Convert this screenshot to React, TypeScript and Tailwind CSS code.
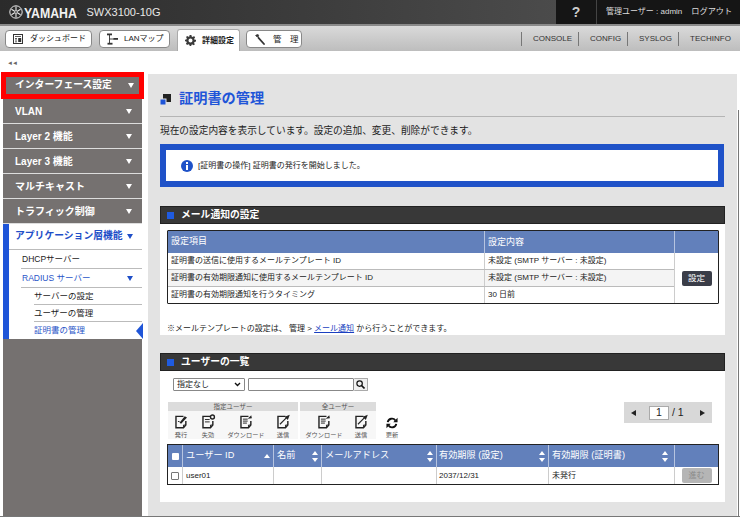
import type { ReactNode } from "react";

const NAV_ITEMS = ["VLAN", "Layer 2 機能", "Layer 3 機能", "マルチキャスト", "トラフィック制御"];

function Caret({ className = "border-t-white" }: { className?: string }) {
  return <span className={`h-0 w-0 border-x-[3.5px] border-t-[5px] border-x-transparent ${className}`} />;
}

function Sort() {
  return (
    <span className="flex flex-col gap-[3px]">
      <span className="h-0 w-0 border-x-[3px] border-b-[4px] border-x-transparent border-b-white" />
      <span className="h-0 w-0 border-x-[3px] border-t-[4px] border-x-transparent border-t-white" />
    </span>
  );
}

function YamahaMark() {
  return (
    <svg width="14" height="14" viewBox="0 0 14 14" fill="none" stroke="#e8e8e8">
      <circle cx="7" cy="7" r="6.2" strokeWidth="1" />
      <circle cx="7" cy="7" r="1.4" strokeWidth="0.8" />
      <path d="M7 5.5V1.6M7 8.5v3.9M5.7 6.2 2.4 4.3M8.3 7.8l3.3 1.9M5.7 7.8 2.4 9.7M8.3 6.2l3.3-1.9" strokeWidth="1.1" />
    </svg>
  );
}

function DashIcon() {
  return (
    <svg width="10" height="10" viewBox="0 0 10 10" fill="none" stroke="#333">
      <rect x="0.5" y="0.5" width="9" height="9" />
      <path d="M2 2.500h6M2 4.500h2M2 6h2M2 7.800h2" strokeWidth="0.8" />
      <rect x="5.200" y="4" width="3" height="4" fill="#333" stroke="none" />
    </svg>
  );
}

function LanIcon() {
  return (
    <svg width="11" height="12" viewBox="0 0 11 12" fill="none" stroke="#333">
      <path d="M2.500 1v10M2.500 6H7" strokeWidth="0.9" />
      <rect x="0" y="0.500" width="5" height="1.800" fill="#333" stroke="none" />
      <rect x="6.500" y="5" width="4.500" height="1.800" fill="#333" stroke="none" />
      <rect x="0.500" y="9.800" width="5" height="1.800" fill="#333" stroke="none" />
    </svg>
  );
}

function GearIcon() {
  return (
    <svg width="11" height="11" viewBox="0 0 12 12">
      <path
        fill="#3a3a3a"
        fillRule="evenodd"
        d="M5 0h2l.3 1.600 1.200.5L9.900 1.200 11 2.800 10 4l.4 1.100L12 5.300v1.900l-1.600.3-.5 1.200.9 1.400L9.500 11.300 8.200 10.300 7 10.700 6.800 12H5.100l-.3-1.500-1.200-.5-1.300.9L1 9.600 1.900 8.300 1.500 7.200 0 6.900V5.100l1.500-.3.500-1.200-.9-1.300L2.400 1l1.300.9L4.800 1.500zM6 3.800a2.200 2.200 0 1 0 0 4.400 2.200 2.200 0 0 0 0-4.400z"
      />
    </svg>
  );
}

function WrenchIcon() {
  return (
    <svg width="10" height="11" viewBox="0 0 10 11" fill="none" stroke="#333">
      <path d="M9 10 3.500 3.800" strokeWidth="1.800" strokeLinecap="round" />
      <path d="M.5 1.500 2 3l1.500-.5.200-1.400L2.500.3z" fill="#333" strokeWidth="0.6" />
    </svg>
  );
}

function DocIcon({ mark }: { mark: "run" | "revoke" | "download" | "send" }) {
  return (
    <svg width="15" height="15" viewBox="0 0 19 19" fill="none" stroke="#222">
      <path d="M12 3H2.500v14.500h9.500L15 14V9" strokeWidth="1.800" />
      <path d="M15 14h-3v3.500" strokeWidth="1.200" />
      {mark === "run" && (
        <>
          <path d="M7 11l6.500-8 3 1.500-7.500 8z" fill="#222" stroke="none" />
          <path d="M5 9.500h2" strokeWidth="1.200" />
        </>
      )}
      {mark === "revoke" && (
        <>
          <circle cx="14.500" cy="3.800" r="2.500" strokeWidth="1.800" />
          <path d="M5 7h6M5 10h6" strokeWidth="1.200" />
        </>
      )}
      {mark === "download" && (
        <>
          <path d="M5 6.500h6M5 9h6M5 11.500h5" strokeWidth="1.200" />
          <path d="M11 6l4.500-4.500.8 4z" fill="#222" stroke="none" />
        </>
      )}
      {mark === "send" && (
        <>
          <path d="M5 13 14 4" strokeWidth="1.400" />
          <path d="M11 3.500 17.500 1l-2.500 6.500z" fill="#222" stroke="none" />
        </>
      )}
    </svg>
  );
}

function RefreshIcon() {
  return (
    <svg width="12" height="12" viewBox="0 0 14 14" fill="none" stroke="#111" strokeWidth="2.200">
      <path d="M2 6a5 5 0 0 1 9-2" />
      <path d="M12 8a5 5 0 0 1-9 2" />
      <path d="M13.500 1v5h-5z" fill="#111" stroke="none" />
      <path d="M.5 13V8h5z" fill="#111" stroke="none" />
    </svg>
  );
}

function Section({ title, children, className }: { title: string; children: ReactNode; className: string }) {
  return (
    <section className="mb-[18px]">
      <div className="flex h-[18px] items-center gap-[7px] border border-[#222] bg-[#383838] pl-[6px] text-[9.800px] font-bold text-white">
        <span className="h-[7px] w-[7px] bg-[#1f5be0]" />
        {title}
      </div>
      <div className={`bg-white ${className}`}>{children}</div>
    </section>
  );
}

function ToolButton({ label, width, children }: { label: string; width: string; children: ReactNode }) {
  return (
    <div className={`flex flex-col items-center ${width}`}>
      <div className="flex h-[18px] items-end">{children}</div>
      <span className="mt-px whitespace-nowrap text-[6.200px] leading-[9px] text-[#555]">{label}</span>
    </div>
  );
}

export default function App() {
  return (
    <div className="relative h-[517px] w-[740px] overflow-hidden bg-white font-['Liberation_Sans','Noto_Sans_CJK_JP',sans-serif] text-[#222]">
      {/* top bar */}
      <header className="flex h-[24px] bg-gradient-to-r from-[#2b2b2b] to-[#565656] text-white">
        <div className="flex w-[556px] items-center pl-[9px]">
          <YamahaMark />
          <span className="ml-px origin-left scale-x-[0.82] text-[15px] font-bold leading-none text-[#f2f2f2]">YAMAHA</span>
          <span className="-ml-[2px] text-[11px] text-[#e8e8e8]">SWX3100-10G</span>
        </div>
        <div className="flex flex-1 items-center bg-[#151515]">
          <span className="flex h-full w-[41px] items-center justify-center border-r border-[#444] text-[14px] font-bold text-[#ccc]">?</span>
          <span className="ml-[9px] text-[8px] text-[#ddd]">管理ユーザー : admin</span>
          <span className="ml-[9px] text-[8.200px] text-[#ddd]">ログアウト</span>
        </div>
      </header>
      <div className="h-[2px] bg-[#8a8a8a]" />

      {/* tab bar */}
      <nav className="flex h-[25px] bg-gradient-to-b from-[#dadada] to-[#bdbdbd] pl-[5px]">
        <div className="mt-[4px] flex h-[18px] w-[87px] items-center gap-[7px] rounded-[4px] border border-[#888] bg-white pl-[7px] text-[8px]">
          <DashIcon />
          ダッシュボード
        </div>
        <div className="ml-[7px] mt-[4px] flex h-[18px] w-[71px] items-center gap-[6px] rounded-[4px] border border-[#888] bg-white pl-[7px] text-[8px]">
          <LanIcon />
          LANマップ
        </div>
        <div className="ml-[7px] mt-[3px] flex h-[22px] w-[63px] items-center gap-[6px] rounded-t-[3px] border-x border-t border-[#aaa] bg-white pl-[7px] text-[8px] font-bold">
          <GearIcon />
          詳細設定
        </div>
        <div className="ml-[6px] mt-[4px] flex h-[18px] w-[56px] items-center gap-[8px] rounded-[4px] border border-[#888] bg-white pl-[8px] text-[8.500px]">
          <WrenchIcon />
          管　理
        </div>
        <div className="ml-auto flex h-[14px] self-center pr-[9px] text-[8px] leading-[14px] text-[#333]">
          <span className="w-[57px] border-l border-[#777] pl-[11px]">CONSOLE</span>
          <span className="w-[49px] border-l border-[#777] pl-[11px]">CONFIG</span>
          <span className="w-[51px] border-l border-[#777] pl-[11px]">SYSLOG</span>
          <span className="w-[53px] border-l border-[#777] pl-[11px]">TECHINFO</span>
        </div>
      </nav>

      <div className="flex h-[23px] items-center pl-[7px] pt-[1px] text-[6px] leading-none tracking-[-1px] text-[#666]">◄◄</div>

      {/* body */}
      <div className="flex">
        <aside className="flex h-[443px] w-[148px] flex-col">
          <div className="-mt-[2px] ml-px w-[143px] border-[5px] border-[#f00] bg-white">
            <div className="flex h-[17px] items-center justify-between bg-[#757170] pl-[9px] pr-[5px] text-[9.800px] font-bold text-white">
              インターフェース設定
              <Caret />
            </div>
          </div>
          <div className="ml-[3px] flex w-[139px] flex-1 flex-col bg-[#757170]">
            {NAV_ITEMS.map((item) => (
              <div
                key={item}
                className="flex h-[25px] items-center justify-between border-b border-[#ddd] pl-[12px] pr-[10px] text-[10px] font-bold text-white"
              >
                {item}
                <Caret />
              </div>
            ))}
            <div className="flex h-[115px] border-l-[6px] border-[#1f55d8] bg-white">
              <div className="relative flex-1 text-[8.500px]">
                <div className="flex h-[26px] items-center justify-between border-b border-[#bbb] pl-[6px] pr-[9px] text-[9.800px] font-bold text-[#1f4fc8]">
                  アプリケーション層機能
                  <Caret className="border-t-[#1f4fc8]" />
                </div>
                <div className="ml-[12px] flex h-[19px] items-center border-b border-[#bbb] pl-px">DHCPサーバー</div>
                <div className="ml-[12px] flex h-[19px] items-center justify-between border-b border-[#bbb] pl-px pr-[9px] text-[#2a55c8]">
                  RADIUS サーバー
                  <Caret className="border-t-[#1f4fc8]" />
                </div>
                <div className="ml-[25px] flex h-[17px] items-center border-b border-[#bbb]">サーバーの設定</div>
                <div className="ml-[25px] flex h-[17px] items-center border-b border-[#bbb]">ユーザーの管理</div>
                <div className="ml-[25px] flex h-[17px] items-center text-[#2a55c8]">証明書の管理</div>
                <span className="absolute bottom-0 right-[-1px] h-0 w-0 border-y-[8px] border-r-[7px] border-y-transparent border-r-[#1f55d8]" />
              </div>
            </div>
          </div>
        </aside>

        {/* main panel */}
        <main className="h-[443px] w-[589px] bg-[#e3e3e3] px-[12px]">
          <div className="flex h-[43px] items-center gap-[8px] border-b border-[#b5b5b5] pt-[8px]">
            <svg width="11" height="11" viewBox="0 0 11 11">
              <rect x="3" y="0" width="8" height="8" fill="#222" />
              <rect x="0" y="5" width="6" height="6" fill="#1f55d8" stroke="#e3e3e3" />
            </svg>
            <h1 className="text-[14.200px] font-bold text-[#1f55d8]">証明書の管理</h1>
          </div>
          <p className="mt-[6px] text-[9.700px] leading-[15px]">現在の設定内容を表示しています。設定の追加、変更、削除ができます。</p>
          <div className="mr-px mt-[6px] flex h-[43px] items-center border-[6px] border-[#1f52c8] bg-white pl-[15px] text-[8px]">
            <svg width="12" height="12" viewBox="0 0 12 12">
              <circle cx="6" cy="6" r="6" fill="#1f52c8" />
              <rect x="5" y="2" width="2" height="2" fill="#fff" />
              <rect x="5" y="5" width="2" height="5" fill="#fff" />
            </svg>
            <span className="ml-[5px]">[証明書の操作] 証明書の発行を開始しました。</span>
          </div>

          <div className="mt-[19px]">
            <Section title="メール通知の設定" className="h-[111px] px-[7px] pt-[6px]">
              <div className="flex w-[552px] flex-col overflow-hidden rounded-[1px] border border-[#222] text-[8px]">
                <div className="flex h-[22px] items-center bg-[#6280bb] text-[9px] text-white">
                  <span className="w-[316px] pl-[3px]">設定項目</span>
                  <span className="w-[190px] border-l border-[#b6c4e0] pl-[3px] leading-[22px]">設定内容</span>
                  <span className="h-full flex-1 border-l border-[#b6c4e0]" />
                </div>
                <div className="flex">
                  <div className="w-[506px]">
                    <div className="flex h-[17px] items-center border-b border-[#bbb]">
                      <span className="w-[316px] pl-[3px]">証明書の送信に使用するメールテンプレート ID</span>
                      <span className="flex h-full flex-1 items-center border-l border-[#ccc] pl-[3px]">未設定 (SMTP サーバー : 未設定)</span>
                    </div>
                    <div className="flex h-[17px] items-center border-b border-[#bbb] bg-[#f4f4f4]">
                      <span className="w-[316px] pl-[3px]">証明書の有効期限通知に使用するメールテンプレート ID</span>
                      <span className="flex h-full flex-1 items-center border-l border-[#ccc] pl-[3px]">未設定 (SMTP サーバー : 未設定)</span>
                    </div>
                    <div className="flex h-[16px] items-center">
                      <span className="w-[316px] pl-[3px]">証明書の有効期限通知を行うタイミング</span>
                      <span className="flex h-full flex-1 items-center border-l border-[#ccc] pl-[3px]">30 日前</span>
                    </div>
                  </div>
                  <div className="flex flex-1 items-center justify-center border-l border-[#ccc]">
                    <span className="flex h-[15px] w-[30px] items-center justify-center rounded-[2px] bg-[#3a3d48] text-[8.500px] text-white">設定</span>
                  </div>
                </div>
              </div>
              <p className="mt-[19px] text-[8px]">
                ※メールテンプレートの設定は、 管理 &gt; <span className="text-[#1a3fc0] underline">メール通知</span> から行うことができます。
              </p>
            </Section>

            <Section title="ユーザーの一覧" className="h-[131px] px-[7px] pt-[7px]">
              <div className="flex h-[13px] pl-[6px]">
                <div className="flex w-[72px] items-center justify-between rounded-[1px] border border-[#888] pl-[3px] pr-[3px] text-[8px]">
                  指定なし
                  <svg width="7" height="5" viewBox="0 0 7 5" fill="none" stroke="#111" strokeWidth="1.400">
                    <path d="M1 1l2.500 2.500L6 1" />
                  </svg>
                </div>
                <div className="ml-[3px] w-[106px] rounded-[1px] border border-[#888]" />
                <div className="flex w-[14px] items-center justify-center rounded-[1px] border border-l-0 border-[#aaa] bg-[#f0f0f0]">
                  <svg width="9" height="9" viewBox="0 0 9 9" fill="none" stroke="#111">
                    <circle cx="3.600" cy="3.600" r="2.700" strokeWidth="1.200" />
                    <path d="M5.500 5.500 8.500 8.500" strokeWidth="1.600" />
                  </svg>
                </div>
              </div>

              <div className="mt-[11px] flex h-[37px] items-start justify-between pl-px pr-[6px]">
                <div className="flex">
                  <div className="h-[37px] w-[130px] bg-[#f7f7f7]">
                    <div className="h-[9px] bg-[#dcdcdc] text-center text-[6.500px] leading-[9px] text-[#555]">指定ユーザー</div>
                    <div className="flex">
                      <ToolButton label="発行" width="w-[26px]"><DocIcon mark="run" /></ToolButton>
                      <ToolButton label="失効" width="w-[28px]"><DocIcon mark="revoke" /></ToolButton>
                      <ToolButton label="ダウンロード" width="w-[48px]"><DocIcon mark="download" /></ToolButton>
                      <ToolButton label="送信" width="w-[26px]"><DocIcon mark="send" /></ToolButton>
                    </div>
                  </div>
                  <div className="ml-[2px] h-[37px] w-[76px] bg-[#f7f7f7]">
                    <div className="h-[9px] bg-[#dcdcdc] text-center text-[6.500px] leading-[9px] text-[#555]">全ユーザー</div>
                    <div className="flex">
                      <ToolButton label="ダウンロード" width="w-[48px]"><DocIcon mark="download" /></ToolButton>
                      <ToolButton label="送信" width="w-[26px]"><DocIcon mark="send" /></ToolButton>
                    </div>
                  </div>
                  <div className="ml-[3px] mt-[9px]">
                    <ToolButton label="更新" width="w-[26px]"><RefreshIcon /></ToolButton>
                  </div>
                </div>
                <div className="flex h-[21px] w-[88px] items-center bg-[#d8d8d8] pl-[7px] text-[10.500px]">
                  <span className="h-0 w-0 border-y-[3.500px] border-r-[5px] border-y-transparent border-r-[#222]" />
                  <span className="ml-[13px] flex h-[14px] w-[20px] items-center justify-center border border-[#aaa] bg-white">1</span>
                  <span className="ml-[3px]">/ 1</span>
                  <span className="ml-[16px] h-0 w-0 border-y-[3.500px] border-l-[5px] border-y-transparent border-l-[#222]" />
                </div>
              </div>

              <div className="mt-[5px] flex w-[552px] flex-col overflow-hidden border border-[#222]">
                <div className="flex h-[22px] items-center bg-[#6280bb] text-[9.200px] text-white">
                  <span className="flex h-full w-[14px] items-center justify-center">
                    <span className="h-[7px] w-[7px] rounded-[1px] bg-white" />
                  </span>
                  <span className="flex h-full w-[91px] items-center justify-between border-l border-[#b6c4e0] pl-[3px] pr-[3px]">
                    ユーザー ID
                    <span className="h-0 w-0 border-x-[3px] border-b-[4px] border-x-transparent border-b-white" />
                  </span>
                  <span className="flex h-full w-[48px] items-center justify-between border-l border-[#b6c4e0] pl-[3px] pr-[3px]">名前<Sort /></span>
                  <span className="flex h-full w-[115px] items-center justify-between border-l border-[#b6c4e0] pl-[3px] pr-[3px]">メールアドレス<Sort /></span>
                  <span className="flex h-full w-[112px] items-center justify-between border-l border-[#b6c4e0] pl-[2px] pr-[3px]">有効期限 (設定)<Sort /></span>
                  <span className="flex h-full w-[126px] items-center justify-between border-l border-[#b6c4e0] pl-[3px] pr-[6px]">有効期限 (証明書)<Sort /></span>
                  <span className="h-full flex-1 border-l border-[#b6c4e0]" />
                </div>
                <div className="flex h-[17px] items-center text-[8px]">
                  <span className="flex h-full w-[14px] items-center justify-center">
                    <span className="h-[8px] w-[8px] rounded-[1px] border border-[#777] bg-white" />
                  </span>
                  <span className="flex h-full w-[91px] items-center border-l border-[#ccc] pl-[3px]">user01</span>
                  <span className="h-full w-[48px] border-l border-[#ccc]" />
                  <span className="h-full w-[115px] border-l border-[#ccc]" />
                  <span className="flex h-full w-[112px] items-center border-l border-[#ccc] pl-[2px]">2037/12/31</span>
                  <span className="flex h-full w-[126px] items-center border-l border-[#ccc] pl-[3px]">未発行</span>
                  <span className="flex h-full flex-1 items-center justify-center border-l border-[#ccc]">
                    <span className="flex h-[15px] w-[30px] items-center justify-center rounded-[2px] bg-[#b5b5b5] text-[8px] text-[#8a8a8a]">進む</span>
                  </span>
                </div>
              </div>
            </Section>
          </div>
        </main>
      </div>
      {/* window edge */}
      <div className="absolute bottom-0 left-0 h-px w-full bg-[#777]" />
      <div className="absolute right-[1px] top-[110px] h-full w-px bg-[#777]" />
    </div>
  );
}
